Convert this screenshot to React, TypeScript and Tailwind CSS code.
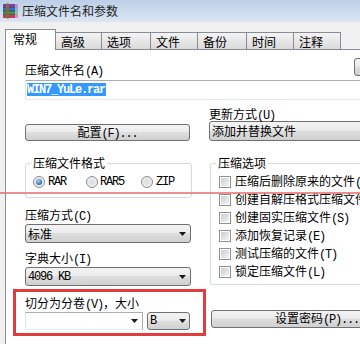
import React from "react";

const monoCls =
  "inline-block h-[12px] leading-[12px] font-['Liberation_Mono',monospace] text-[12px] tracking-[-1.2px]";

function T({ s }: { s: string }) {
  const parts = s.split(/([\x20-\x7e]+)/).filter((p) => p !== "");
  return (
    <>
      {parts.map((p, i) =>
        /^[\x20-\x7e]+$/.test(p) ? (
          <span key={i} className={`${monoCls} whitespace-pre`}>
            {p}
          </span>
        ) : (
          <span key={i}>{p}</span>
        )
      )}
    </>
  );
}

const Arrow = () => (
  <svg width="7" height="4" viewBox="0 0 7 4">
    <path d="M0 0H7L3.5 4Z" fill="#1a1a1a" />
  </svg>
);

const btnBg =
  "bg-[linear-gradient(180deg,#f3f3f3_0%,#ececec_45%,#dedede_50%,#d0d0d0_100%)] border border-[#707070] rounded-[3px]";

function Radio({ checked }: { checked?: boolean }) {
  return (
    <div className="flex h-[12px] w-[12px] shrink-0 items-center justify-center rounded-full border border-[#8a8c90] bg-[radial-gradient(circle_at_50%_50%,#d9dadc,#f7f7f7)]">
      {checked && (
        <div className="h-[6px] w-[6px] rounded-full bg-[radial-gradient(circle_at_40%_35%,#a8dcf8,#2a6aa8_70%,#1b4f80)]" />
      )}
    </div>
  );
}

function Check() {
  return (
    <div className="flex h-[12px] w-[12px] shrink-0 items-center justify-center border border-[#8e8f8f] bg-white">
      <div className="h-[8px] w-[8px] bg-[linear-gradient(135deg,#c9ccd1,#f4f4f4)]" />
    </div>
  );
}

function Icon() {
  return (
    <svg width="17" height="16" viewBox="0 0 17 16" className="ml-[2px] shrink-0">
      <rect x="1" y="1" width="15" height="3.5" fill="#7b3fa0" />
      <rect x="1" y="4.5" width="15" height="3.5" fill="#2f6fd0" />
      <rect x="1" y="8" width="15" height="3.5" fill="#3a9a4a" />
      <rect x="1" y="11.5" width="15" height="3.5" fill="#c53a6a" />
      <path d="M1 4.5H16M1 8H16M1 11.5H16" stroke="#333" strokeWidth="0.6" />
      <rect x="13" y="1" width="3" height="14" fill="#ffffff" opacity="0.45" />
      <rect x="4" y="0.5" width="3" height="15" fill="#8a6a34" />
    </svg>
  );
}

const tabs = [
  { label: "高级", w: "w-[46px]" },
  { label: "选项", w: "w-[49px]" },
  { label: "文件", w: "w-[47px]" },
  { label: "备份", w: "w-[49px]" },
  { label: "时间", w: "w-[47px]" },
  { label: "注释", w: "w-[47px]" },
];

const options = [
  "压缩后删除原来的文件(D)",
  "创建自解压格式压缩文件(X)",
  "创建固实压缩文件(S)",
  "添加恢复记录(E)",
  "测试压缩的文件(T)",
  "锁定压缩文件(L)",
];

export default function App() {
  return (
    <div className="relative h-[344px] w-[360px] overflow-hidden bg-[#f0f0f0] font-['Noto_Sans_CJK_SC',sans-serif] text-[12px] leading-[12px] text-black">
      {/* title bar */}
      <div className="flex h-[22px] items-center bg-[linear-gradient(180deg,#bccfe7,#dbe6f3)]">
        <Icon />
        <span className="ml-[3px] whitespace-nowrap text-[#1e1e1e]">压缩文件名和参数</span>
      </div>

      {/* tabs */}
      <div className="flex h-[28px] items-end pl-[5px]">
        <div className="relative z-10 h-[21px] w-[51px] shrink-0 border border-b-0 border-[#898c95] bg-white pl-[7px] pt-[3px]">
          常规
        </div>
        {tabs.map((t) => (
          <div
            key={t.label}
            className={`mb-[1px] h-[17px] shrink-0 border-r border-t border-[#898c95] bg-[linear-gradient(180deg,#f4f4f4,#dadada)] pl-[5px] pt-[3px] ${t.w}`}
          >
            {t.label}
          </div>
        ))}
      </div>

      {/* panel */}
      <div className="-mt-[1px] ml-[5px] h-[300px] w-[420px] border-l border-t border-[#898c95] bg-white pl-[19px]">
        {/* filename label + browse */}
        <div className="mt-[8px] flex h-[18px] w-[389px] items-end">
          <div className="h-[12px] whitespace-nowrap">
            <T s="压缩文件名(A)" />
          </div>
          <div className={`ml-auto h-[18px] w-[60px] ${btnBg}`} />
        </div>

        {/* filename box */}
        <div className="mt-[4px] h-[20px] w-[400px] border border-[#abadb3] border-b-[#e3e9ef] border-l-[#e2e3ea] bg-white">
          <div className="ml-[1px] mt-[2px] inline-flex h-[13px] items-center bg-[#3399ff] pr-[1px] text-white">
            <span className={`${monoCls} font-bold`}>WIN7_YuLe.rar</span>
          </div>
        </div>

        <div className="flex">
          {/* left column */}
          <div className="w-[166px] shrink-0">
            <div className={`mt-[24px] flex h-[17px] w-[165px] items-center justify-center ${btnBg}`}>
              <span className="whitespace-nowrap">
                <T s="配置(F)..." />
              </span>
            </div>

            <fieldset className="mt-[16px] w-[167px] rounded-[3px] border border-[#d5dadf] p-0">
              <legend className="ml-[5px] px-[2px] leading-[12px]">压缩文件格式</legend>
              <div className="flex items-center pb-[9px] pl-[7px] pt-[7px]">
                <div className="flex w-[53px] items-center gap-[3px]">
                  <Radio checked />
                  <T s="RAR" />
                </div>
                <div className="flex w-[55px] items-center gap-[2px]">
                  <Radio />
                  <T s="RAR5" />
                </div>
                <div className="flex items-center gap-[3px]">
                  <Radio />
                  <T s="ZIP" />
                </div>
              </div>
            </fieldset>

            <div className="mt-[11px] h-[12px] whitespace-nowrap">
              <T s="压缩方式(C)" />
            </div>
            <div className={`mt-[3px] flex h-[19px] w-[166px] items-center justify-between pl-[2px] pr-[4px] ${btnBg}`}>
              <span>标准</span>
              <Arrow />
            </div>

            <div className="mt-[9px] h-[12px] whitespace-nowrap">
              <T s="字典大小(I)" />
            </div>
            <div className={`mt-[3px] flex h-[19px] w-[166px] items-center justify-between pl-[2px] pr-[4px] ${btnBg}`}>
              <T s="4096 KB" />
              <Arrow />
            </div>

            <div className="mt-[11px] h-[12px] whitespace-nowrap">
              <T s="切分为分卷(V)，大小" />
            </div>
            <div className="mt-[3px] flex">
              <div className="flex h-[18px] w-[118px] items-center justify-end border border-[#abadb3] border-b-[#e3e9ef] border-l-[#e2e3ea] bg-white pr-[4px]">
                <Arrow />
              </div>
              <div className={`ml-[4px] flex h-[18px] w-[43px] items-center justify-between pl-[2px] pr-[3px] ${btnBg}`}>
                <T s="B" />
                <Arrow />
              </div>
            </div>
          </div>

          {/* right column */}
          <div className="ml-[18px] w-[230px] shrink-0">
            <div className="mt-[8px] h-[12px] whitespace-nowrap">
              <T s="更新方式(U)" />
            </div>
            <div className={`mt-[1px] flex h-[20px] w-[220px] items-center pl-[2px] ${btnBg}`}>
              <span className="whitespace-nowrap">添加并替换文件</span>
            </div>

            <fieldset className="ml-[1px] mt-[16px] w-[220px] rounded-[3px] border border-[#d5dadf] p-0">
              <legend className="ml-[5px] px-[2px] leading-[12px]">压缩选项</legend>
              <div className="pb-[3px] pl-[8px] pt-[4px]">
                {options.map((o) => (
                  <div key={o} className="flex h-[18px] items-center gap-[4px] whitespace-nowrap">
                    <Check />
                    <span>
                      <T s={o} />
                    </span>
                  </div>
                ))}
              </div>
            </fieldset>

            <div className={`ml-[2px] mt-[25px] flex h-[18px] w-[212px] items-center justify-center ${btnBg}`}>
              <span className="whitespace-nowrap">
                <T s="设置密码(P)..." />
              </span>
            </div>
          </div>
        </div>
      </div>

      {/* annotations */}
      <div className="pointer-events-none absolute left-0 top-[192px] h-[2px] w-[360px] bg-[#ea7373] opacity-80" />
      <div className="pointer-events-none absolute left-[13px] top-[289px] h-[47px] w-[193px] border-[3px] border-[#e23b3b]" />
    </div>
  );
}
